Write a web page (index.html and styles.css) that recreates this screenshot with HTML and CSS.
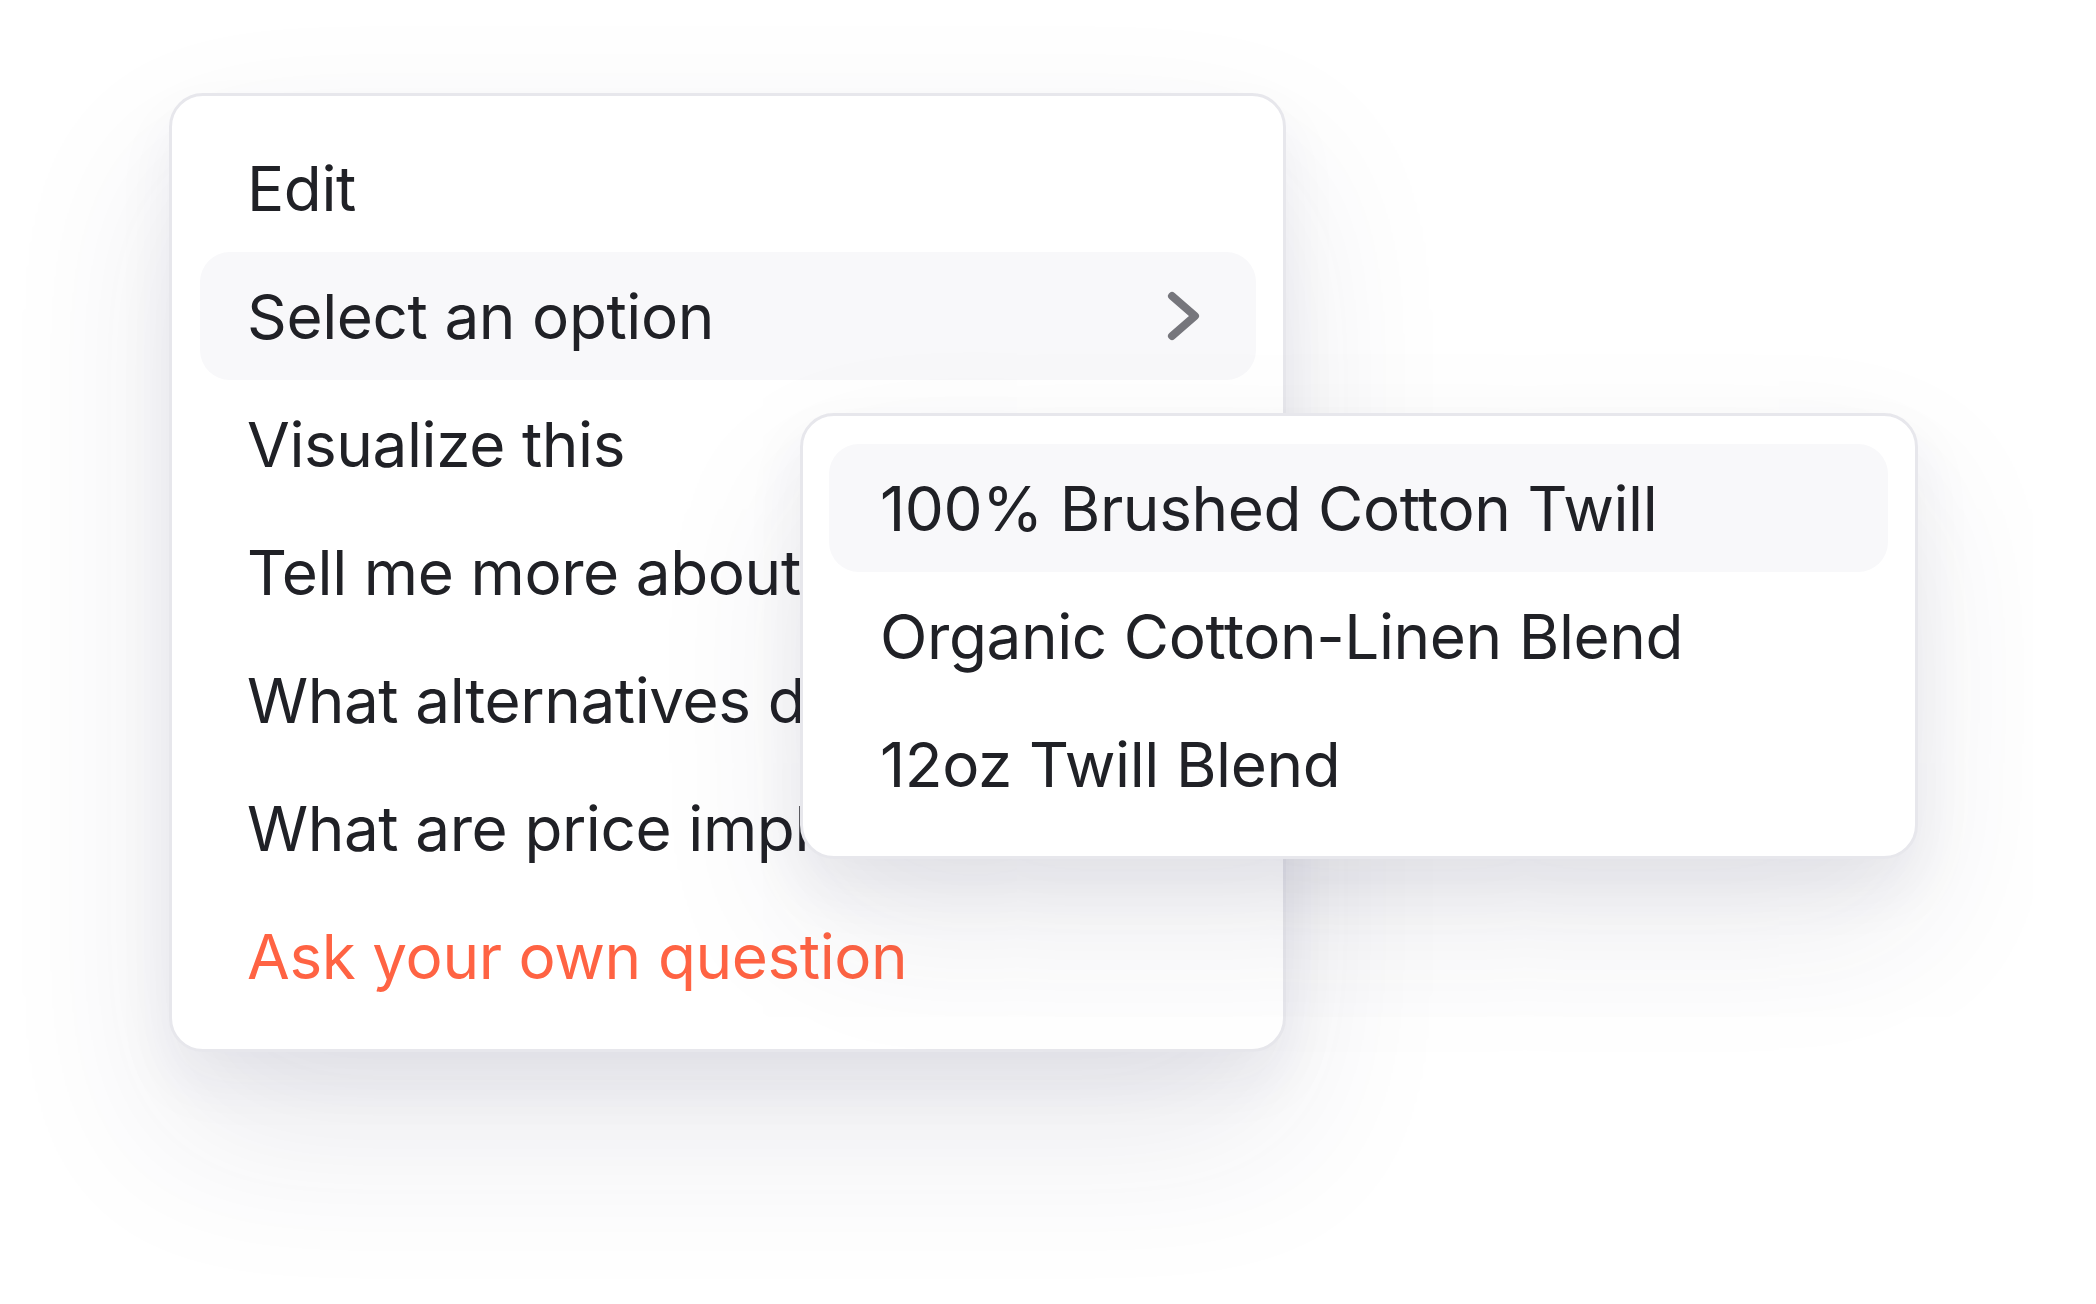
FILE: index.html
```html
<!DOCTYPE html>
<html lang="en">
<head>
<meta charset="utf-8">
<title>Menu</title>
<link rel="stylesheet" href="styles.css">
</head>
<body>
<div class="stage">
  <div class="menu">
    <div class="item">Edit</div>
    <div class="item item--active">
      <span>Select an option</span>
      <svg class="chev" width="34" height="50" viewBox="0 0 34 50" aria-hidden="true">
        <path d="M5 5 L28 25 L5 45" fill="none" stroke="#76767c" stroke-width="8" stroke-linecap="round" stroke-linejoin="round"/>
      </svg>
    </div>
    <div class="item">Visualize this</div>
    <div class="item">Tell me more about this</div>
    <div class="item">What alternatives do I have?</div>
    <div class="item">What are price implications?</div>
    <div class="item item--accent">Ask your own question</div>

    <div class="submenu">
      <div class="item item--active">100% Brushed Cotton Twill</div>
      <div class="item">Organic Cotton-Linen Blend</div>
      <div class="item">12oz Twill Blend</div>
    </div>
  </div>
</div>
</body>
</html>
```
FILE: styles.css
```css
html, body {
  margin: 0;
  padding: 0;
  background: #ffffff;
}
body {
  width: 2096px;
  height: 1304px;
  overflow: hidden;
  font-family: "Inter", "Liberation Sans", sans-serif;
  color: #202126;
}
.stage {
  padding: 93px 0 0 169px;
}
.menu {
  position: relative;
  width: 1117px;
  box-sizing: border-box;
  border: 3px solid #e7e7ec;
  border-radius: 34px;
  background: #ffffff;
  padding: 28px 27px 29px 28px;
  box-shadow: 0 30px 60px rgba(40, 40, 80, 0.06), 0 80px 170px rgba(40, 40, 80, 0.10);
}
.item {
  height: 128px;
  display: flex;
  align-items: center;
  padding: 0 50px 0 47px;
  border-radius: 30px;
  font-size: 62px;
  font-weight: 400;
  letter-spacing: -0.4px;
  white-space: nowrap;
}
.item--active {
  background: #f8f8fa;
}
.item--accent {
  color: #ff6343;
}
.chev {
  margin-left: auto;
  margin-right: 5px;
}
.submenu {
  position: absolute;
  left: 628px;
  top: 317px;
  width: 1118px;
  box-sizing: border-box;
  border: 3px solid #e7e7ec;
  border-radius: 34px;
  background: #ffffff;
  padding: 28px 27px 28px 26px;
  box-shadow: 0 30px 60px rgba(40, 40, 80, 0.07), 0 70px 160px rgba(40, 40, 80, 0.09);
}
.submenu .item {
  padding-left: 51px;
}
```
